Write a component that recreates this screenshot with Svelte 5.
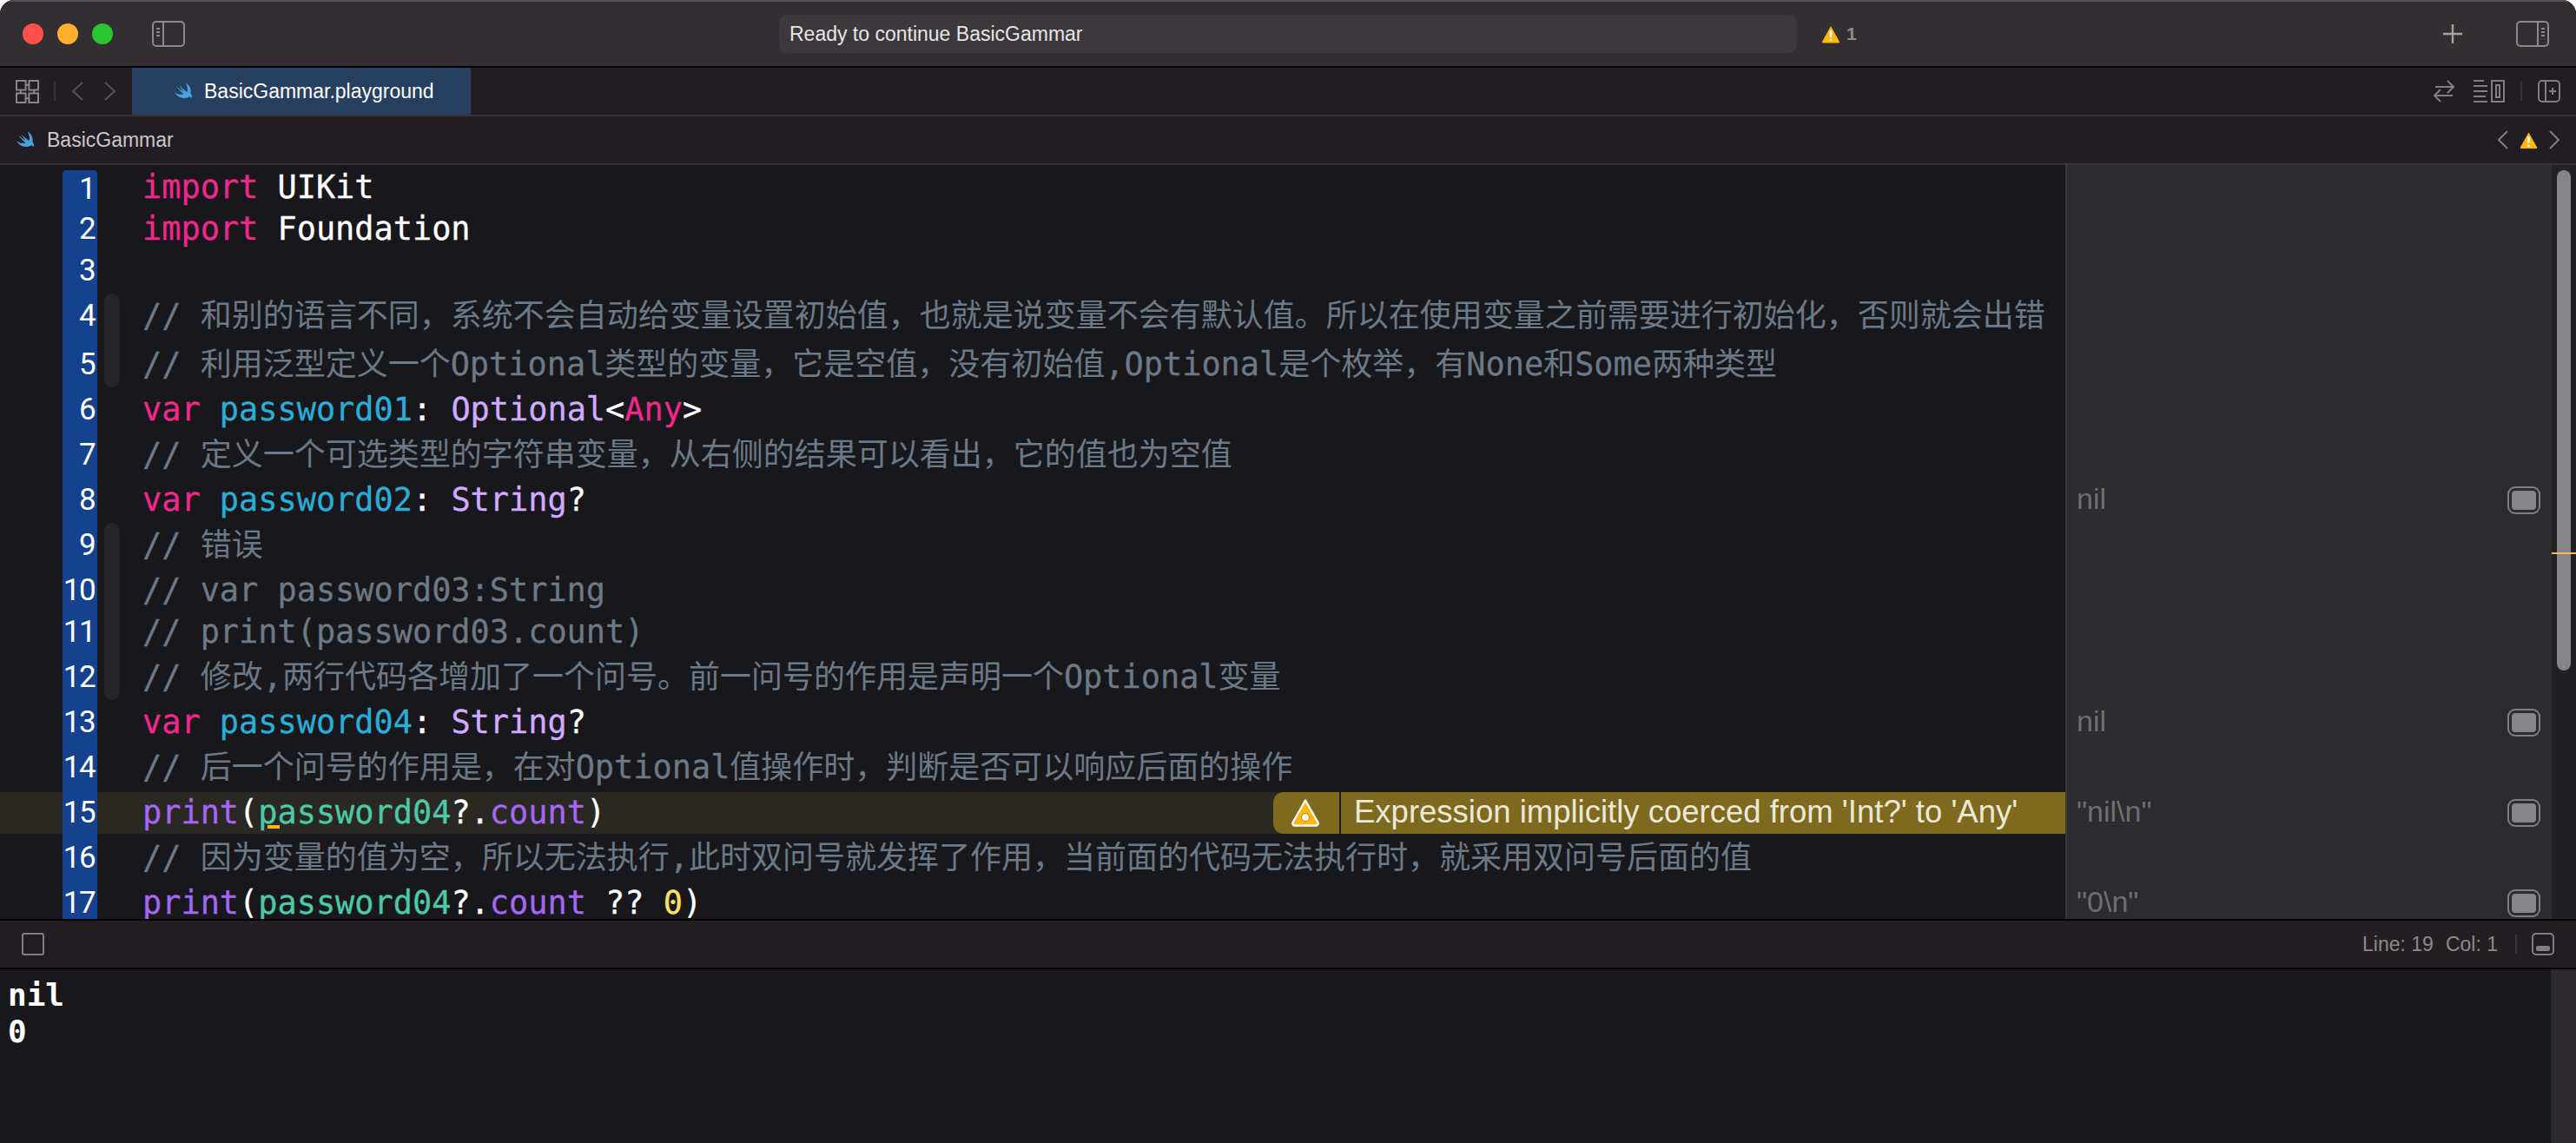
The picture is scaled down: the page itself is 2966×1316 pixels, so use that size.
<script>
	// token kinds: k keyword, v variable, t type, f function, g green ident, n number, c comment, p plain
	const lines = [
		{ t: [['k', 'import'], ['p', ' UIKit']] },
		{ t: [['k', 'import'], ['p', ' Foundation']] },
		{ t: [] },
		{ tall: true, fold: 'start', t: [['c', '// 和别的语言不同，系统不会自动给变量设置初始值，也就是说变量不会有默认值。所以在使用变量之前需要进行初始化，否则就会出错']] },
		{ tall: true, fold: 'end', t: [['c', '// 利用泛型定义一个Optional类型的变量，它是空值，没有初始值,Optional是个枚举，有None和Some两种类型']] },
		{ t: [['k', 'var'], ['p', ' '], ['v', 'password01'], ['p', ': '], ['t', 'Optional'], ['p', '<'], ['k', 'Any'], ['p', '>']] },
		{ tall: true, t: [['c', '// 定义一个可选类型的字符串变量，从右侧的结果可以看出，它的值也为空值']] },
		{ result: 'nil', t: [['k', 'var'], ['p', ' '], ['v', 'password02'], ['p', ': '], ['t', 'String'], ['p', '?']] },
		{ tall: true, fold: 'start', t: [['c', '// 错误']] },
		{ fold: 'mid', t: [['c', '// var password03:String']] },
		{ fold: 'mid', t: [['c', '// print(password03.count)']] },
		{ tall: true, fold: 'end', t: [['c', '// 修改,两行代码各增加了一个问号。前一问号的作用是声明一个Optional变量']] },
		{ result: 'nil', t: [['k', 'var'], ['p', ' '], ['v', 'password04'], ['p', ': '], ['t', 'String'], ['p', '?']] },
		{ tall: true, t: [['c', '// 后一个问号的作用是，在对Optional值操作时，判断是否可以响应后面的操作']] },
		{ result: '"nil\\n"', current: true, t: [['f', 'print'], ['p', '('], ['g', 'password04'], ['p', '?.'], ['f', 'count'], ['p', ')']] },
		{ tall: true, t: [['c', '// 因为变量的值为空，所以无法执行,此时双问号就发挥了作用，当前面的代码无法执行时，就采用双问号后面的值']] },
		{ result: '"0\\n"', t: [['f', 'print'], ['p', '('], ['g', 'password04'], ['p', '?.'], ['f', 'count'], ['p', ' ?? '], ['n', '0'], ['p', ')']] }
	];

	const swift =
		'M14.2 1.5c4.3 3.3 6.3 7.4 5.1 11.6 1.5 2 2.1 4.3 1.5 6.1-.9-1.5-2.5-2-3.9-1.3-3.2 1.6-7.6 1.5-11.2-.6C3.8 16 2.2 14.2 1.2 12.2c3.2 2.4 7.2 3.4 10.3 2C8 11.6 5 8.2 3.2 5.2c3 2.9 6 5.2 8.8 7-2.2-2.4-4-5-5.4-7.6 3.4 3.5 6.6 6.1 9 7.4 1-3.2.2-6.8-1.9-10.5z';

	function split(text) {
		return text.split(/([\x20-\x7e]+)/).filter(Boolean).map((s) => ({
			s,
			ascii: /^[\x20-\x7e]/.test(s)
		}));
	}
</script>

<div class="window">
	<header class="titlebar">
		<div class="lights">
			<span class="light red"></span>
			<span class="light yellow"></span>
			<span class="light green"></span>
		</div>
		<svg class="panel-icon left-panel" viewBox="0 0 38 30" fill="none" stroke="#8b898b" stroke-width="2">
			<rect x="1" y="1" width="36" height="28" rx="4" />
			<path d="M13 1v28M5 9h4M5 13h4M5 17h4" />
		</svg>
		<div class="status">Ready to continue BasicGammar</div>
		<div class="status-warn">
			<svg width="22" height="21" viewBox="0 0 22 21">
				<path d="M11 1 21 19a1 1 0 0 1-1 1.5H2A1 1 0 0 1 1 19z" fill="#ffb60a" />
				<path d="M11 6v8M11 16v2" stroke="#fff" stroke-width="2.6" />
			</svg>
			<span>1</span>
		</div>
		<div class="spacer"></div>
		<svg class="plus" width="24" height="24" viewBox="0 0 24 24" stroke="#a5a3a5" stroke-width="2.4">
			<path d="M12 1v22M1 12h22" />
		</svg>
		<svg class="panel-icon" viewBox="0 0 38 30" fill="none" stroke="#8b898b" stroke-width="2">
			<rect x="1" y="1" width="36" height="28" rx="4" />
			<path d="M25 1v28M29 9h4M29 13h4M29 17h4" />
		</svg>
	</header>

	<nav class="tabbar">
		<svg class="grid-icon" width="27" height="27" viewBox="0 0 28 28" fill="none" stroke="#8b898b" stroke-width="2">
			<rect x="1" y="1" width="11" height="11" />
			<rect x="16" y="1" width="11" height="11" />
			<rect x="1" y="16" width="11" height="11" />
			<rect x="16" y="16" width="11" height="11" />
			<path d="M12 6h4M6 12v4M22 12v4M12 22h4" />
		</svg>
		<span class="vsep"></span>
		<svg class="nav-chev" width="14" height="22" viewBox="0 0 14 22" fill="none" stroke="#55525a" stroke-width="2"><path d="M13 1 2 11l11 10" /></svg>
		<svg class="nav-chev next" width="14" height="22" viewBox="0 0 14 22" fill="none" stroke="#55525a" stroke-width="2"><path d="M1 1l11 10L1 21" /></svg>
		<div class="tab">
			<svg width="24" height="22" viewBox="0 0 24 22"><path d={swift} fill="#4ba3de" /></svg>
			<span>BasicGammar.playground</span>
		</div>
		<div class="spacer"></div>
		<svg width="24" height="26" viewBox="0 0 24 26" fill="none" stroke="#827f83" stroke-width="2">
			<path d="M2 8h20M16 1l7 7-7 7M22 18H2M8 11l-7 7 7 7" />
		</svg>
		<svg class="minimap-icon" width="36" height="26" viewBox="0 0 36 26" fill="none" stroke="#827f83" stroke-width="2">
			<path d="M0 1h12M0 7h16M0 13h16M0 19h14M0 25h16" />
			<rect x="21" y="1" width="14" height="24" />
			<rect x="26" y="6" width="4" height="14" />
		</svg>
		<span class="vsep end"></span>
		<svg width="26" height="26" viewBox="0 0 26 26" fill="none" stroke="#827f83" stroke-width="2">
			<rect x="1" y="1" width="24" height="24" rx="4" />
			<path d="M9 1v24M13 13h8M17 9v8" />
		</svg>
	</nav>

	<div class="jumpbar">
		<svg width="24" height="22" viewBox="0 0 24 22"><path d={swift} fill="#4ba3de" /></svg>
		<span class="crumb">BasicGammar</span>
		<div class="spacer"></div>
		<svg width="13" height="22" viewBox="0 0 13 22" fill="none" stroke="#827f83" stroke-width="2"><path d="M12 1 2 11l10 10" /></svg>
		<svg class="jump-warn" width="21" height="21" viewBox="0 0 22 21">
			<path d="M11 1 21 19a1 1 0 0 1-1 1.5H2A1 1 0 0 1 1 19z" fill="#ffb60a" />
			<path d="M11 6v8M11 16v2" stroke="#fff" stroke-width="2.6" />
		</svg>
		<svg width="13" height="22" viewBox="0 0 13 22" fill="none" stroke="#827f83" stroke-width="2"><path d="M1 1l10 10L1 21" /></svg>
	</div>

	<main class="editor">
		<div class="code">
			{#each lines as line, i}
				<div class="row" class:tall={line.tall} class:current={line.current}>
					<div class="num" class:first={i === 0}>{i + 1}</div>
					<div class="fold">
						{#if line.fold}<span class="ribbon {line.fold}"></span>{/if}
					</div>
					<div class="text">
						{#each line.t as [kind, value]}
							<span class={kind}>{#each split(value) as part}<span class:ascii={part.ascii}>{part.s}</span>{/each}</span>
						{/each}
						{#if line.current}<span class="squiggle"></span>{/if}
					</div>
					{#if line.current}
						<div class="issue">
							<div class="issue-icon">
								<svg width="34" height="34" viewBox="0 0 34 34">
									<path d="M17 2.5 31.5 28a2.5 2.5 0 0 1-2.2 3.5H4.7A2.5 2.5 0 0 1 2.5 28z" fill="#ffb60a" stroke="#fff" stroke-width="2.4" stroke-linejoin="round" />
									<circle cx="17" cy="22" r="4.5" fill="#fff" stroke="#a88a1c" stroke-width="1" />
								</svg>
							</div>
							<div class="issue-text">Expression implicitly coerced from 'Int?' to 'Any'</div>
						</div>
					{/if}
				</div>
			{/each}
		</div>
		<aside class="results">
			{#each lines as line}
				<div class="result-row" class:tall={line.tall}>
					{#if line.result}
						<span class="result">{line.result}</span>
						<span class="quicklook"><span></span></span>
					{/if}
				</div>
			{/each}
		</aside>
		<div class="scroller">
			<span class="thumb"></span>
			<span class="marker"></span>
		</div>
	</main>

	<div class="debugbar">
		<span class="console-toggle"></span>
		<div class="spacer"></div>
		<span class="pos">Line: 19</span>
		<span class="pos col">Col: 1</span>
		<span class="vsep dbg"></span>
		<span class="bottom-toggle"><span></span></span>
	</div>

	<section class="console">
		<pre>nil
0</pre>
		<div class="console-scroll"></div>
	</section>
</div>

<style>
	:global(body) {
		margin: 0;
		background: #fff;
	}

	.window {
		width: 2966px;
		height: 1316px;
		display: flex;
		flex-direction: column;
		overflow: hidden;
		border-radius: 16px 16px 0 0;
		background: #18181c;
		font-family: 'Liberation Sans', Arial, sans-serif;
	}

	.spacer {
		flex: 1;
	}

	/* title bar */
	.titlebar {
		box-sizing: border-box;
		height: 78px;
		flex: none;
		display: flex;
		align-items: center;
		background: #322e31;
		border-top: 2px solid #545154;
		border-bottom: 2px solid #000;
		padding-bottom: 0;
	}

	.lights {
		display: flex;
		gap: 16px;
		margin-left: 26px;
	}

	.light {
		width: 24px;
		height: 24px;
		border-radius: 50%;
	}

	.red {
		background: #ff4f4b;
	}

	.yellow {
		background: #ffb02a;
	}

	.green {
		background: #28c72f;
	}

	.panel-icon {
		width: 38px;
		height: 30px;
		flex: none;
		margin-right: 31px;
	}

	.left-panel {
		margin: 0 0 0 45px;
	}

	.status {
		box-sizing: border-box;
		width: 1172px;
		height: 44px;
		margin-left: 684px;
		padding-left: 12px;
		line-height: 44px;
		background: #3c383c;
		border-radius: 10px;
		color: #e8e5e8;
		font-size: 23px;
	}

	.status-warn {
		display: flex;
		align-items: center;
		gap: 7px;
		margin-left: 28px;
		color: #8e8c8e;
		font-size: 21px;
		font-weight: 700;
	}

	.plus {
		margin-right: 61px;
	}

	/* tab bar */
	.tabbar {
		box-sizing: border-box;
		height: 56px;
		flex: none;
		display: flex;
		align-items: center;
		padding-left: 18px;
		padding-right: 18px;
		background: #221d22;
		border-bottom: 2px solid #38333a;
	}

	.vsep {
		width: 2px;
		height: 22px;
		margin: 0 18px 0 17px;
		background: #38343a;
	}

	.vsep.end {
		margin: 0 18px;
	}

	.vsep.dbg {
		margin: 0 17px 0 20px;
	}

	.nav-chev.next {
		margin-left: 24px;
	}

	.tab {
		align-self: stretch;
		width: 390px;
		margin-left: 18px;
		display: flex;
		align-items: center;
		gap: 11px;
		padding-left: 48px;
		box-sizing: border-box;
		background: #274061;
		color: #fff;
		font-size: 23px;
	}

	.minimap-icon {
		margin-left: 22px;
	}

	/* jump bar */
	.jumpbar {
		box-sizing: border-box;
		height: 56px;
		flex: none;
		display: flex;
		align-items: center;
		padding: 0 18px;
		background: #221d22;
		border-bottom: 2px solid #38333a;
	}

	.crumb {
		margin-left: 12px;
		color: #cbc8cb;
		font-size: 23px;
	}

	.jump-warn {
		margin: 0 13px;
	}

	/* editor */
	.editor {
		height: 868px;
		flex: none;
		display: flex;
		overflow: hidden;
		background: #18181c;
	}

	.code {
		width: 2378px;
		flex: none;
		padding-top: 2px;
	}

	.row {
		position: relative;
		height: 48px;
		display: flex;
		font-family: 'DejaVu Sans Mono', 'Noto Sans CJK SC', monospace;
		font-size: 36px;
		line-height: 48px;
		white-space: pre;
		color: #fff;
	}

	.row.tall,
	.result-row.tall {
		height: 56px;
	}

	.row.tall {
		line-height: 56px;
	}

	.row.current {
		background: #2a2822;
	}

	.num {
		box-sizing: border-box;
		width: 40px;
		margin-left: 72px;
		padding-right: 3px;
		flex: none;
		text-align: right;
		background: #15428e;
		font-family: Roboto, sans-serif;
		font-size: 35px;
		letter-spacing: -1.6px;
	}

	.num.first {
		margin-top: 4px;
		line-height: 44px;
		border-radius: 4px 4px 0 0;
	}

	.fold {
		width: 52px;
		flex: none;
		display: flex;
		flex-direction: column;
		padding-left: 8px;
		box-sizing: border-box;
	}

	.ribbon {
		width: 18px;
		flex: 1;
		background: #26262a;
	}

	.ribbon.start {
		margin-top: 2px;
		border-radius: 9px 9px 0 0;
	}

	.ribbon.end {
		margin-bottom: 2px;
		border-radius: 0 0 9px 9px;
	}

	.text {
		position: relative;
	}

	.ascii {
		font-size: 36.9px;
		-webkit-text-stroke: 0.3px;
	}

	.k {
		color: #f0288c;
	}

	.v {
		color: #2aaed8;
	}

	.t {
		color: #d2aaff;
	}

	.f {
		color: #a467f2;
	}

	.g {
		color: #4cc9a6;
	}

	.n {
		color: #ffe066;
	}

	.c {
		color: #6c7986;
	}

	.squiggle {
		position: absolute;
		left: 144px;
		top: 38px;
		width: 14px;
		height: 4px;
		background: #ffb60a;
	}

	.issue {
		position: absolute;
		right: 0;
		top: 0;
		width: 912px;
		height: 48px;
		display: flex;
		background: #7d6a1f;
		border-radius: 12px 0 0 12px;
		font-family: 'Liberation Sans', Arial, sans-serif;
	}

	.issue-icon {
		box-sizing: border-box;
		width: 78px;
		flex: none;
		display: flex;
		align-items: center;
		justify-content: center;
		padding-right: 2px;
		border-right: 2px solid #1e1c14;
	}

	.issue-text {
		padding-left: 15px;
		color: #ece8d8;
		font-size: 36.5px;
		line-height: 46px;
	}

	/* results sidebar */
	.results {
		box-sizing: border-box;
		width: 559px;
		flex: none;
		padding-top: 2px;
		background: #2b2b30;
		border-left: 2px solid #38383d;
	}

	.result-row {
		height: 48px;
		display: flex;
		align-items: center;
		justify-content: space-between;
		padding: 0 12px 0 11px;
	}

	.result {
		color: #6f6f72;
		font-size: 34px;
		line-height: 48px;
		position: relative;
		top: -2px;
	}

	.quicklook {
		box-sizing: border-box;
		width: 38px;
		height: 32px;
		padding: 3px;
		border: 2px solid #7f7f82;
		border-radius: 9px;
	}

	.quicklook span {
		display: block;
		height: 100%;
		background: #858587;
		border-radius: 4px;
	}

	.scroller {
		position: relative;
		flex: 1;
		background: #212124;
		border-left: 1px solid #333337;
	}

	.thumb {
		position: absolute;
		left: 6px;
		top: 6px;
		width: 16px;
		height: 576px;
		border-radius: 8px;
		background: #858587;
	}

	.marker {
		position: absolute;
		left: 0;
		right: 0;
		top: 446px;
		height: 2px;
		background: #f5b95f;
	}

	/* debug bar */
	.debugbar {
		box-sizing: border-box;
		height: 58px;
		flex: none;
		display: flex;
		align-items: center;
		padding: 0 25px;
		background: #231e22;
		border-top: 2px solid #000;
		border-bottom: 2px solid #000;
	}

	.console-toggle {
		box-sizing: border-box;
		width: 26px;
		height: 26px;
		border: 2px solid #807e80;
		border-radius: 3px;
	}

	.pos {
		color: #8d8a8c;
		font-size: 23px;
	}

	.col {
		margin-left: 14px;
	}

	.bottom-toggle {
		box-sizing: border-box;
		width: 26px;
		height: 26px;
		display: flex;
		align-items: flex-end;
		padding: 3px;
		border: 2px solid #807e80;
		border-radius: 5px;
	}

	.bottom-toggle span {
		flex: 1;
		height: 6px;
		background: #807e80;
		border-radius: 2px;
	}

	/* console */
	.console {
		flex: 1;
		display: flex;
		background: #18181c;
	}

	.console pre {
		flex: 1;
		margin: 0;
		padding: 9px 0 0 9px;
		color: #fff;
		font-family: 'DejaVu Sans Mono', monospace;
		font-size: 36px;
		font-weight: 700;
		line-height: 42px;
	}

	.console-scroll {
		width: 29px;
		background: #2c282d;
	}
</style>
